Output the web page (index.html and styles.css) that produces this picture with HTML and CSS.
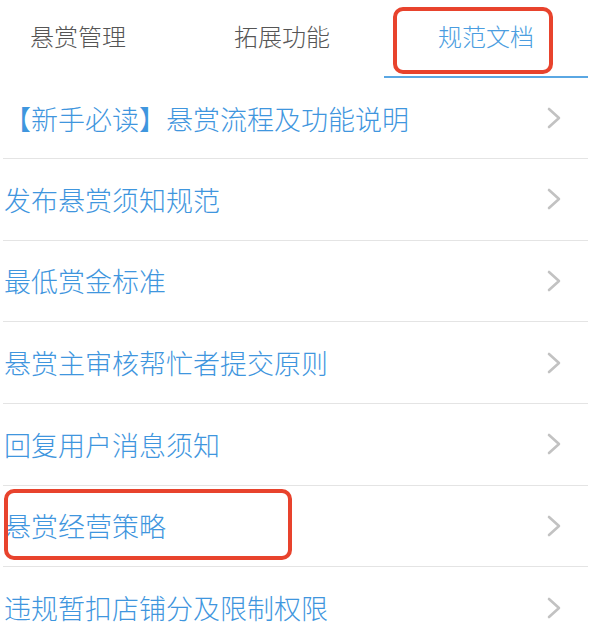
FILE: index.html
```html
<!DOCTYPE html>
<html lang="zh-CN">
<head>
<meta charset="utf-8">
<title>规范文档</title>
<link rel="stylesheet" href="styles.css">
</head>
<body>
<div class="page">
  <nav class="tabs">
    <div class="tab">悬赏管理</div>
    <div class="tab">拓展功能</div>
    <div class="tab active">规范文档</div>
  </nav>
  <ul class="list">
    <li class="row"><span class="label">【新手必读】悬赏流程及功能说明</span><svg class="chev" viewBox="0 0 16 22" width="16" height="22"><polyline points="3,2 13,11 3,20"/></svg></li>
    <li class="row"><span class="label">发布悬赏须知规范</span><svg class="chev" viewBox="0 0 16 22" width="16" height="22"><polyline points="3,2 13,11 3,20"/></svg></li>
    <li class="row"><span class="label">最低赏金标准</span><svg class="chev" viewBox="0 0 16 22" width="16" height="22"><polyline points="3,2 13,11 3,20"/></svg></li>
    <li class="row"><span class="label">悬赏主审核帮忙者提交原则</span><svg class="chev" viewBox="0 0 16 22" width="16" height="22"><polyline points="3,2 13,11 3,20"/></svg></li>
    <li class="row"><span class="label">回复用户消息须知</span><svg class="chev" viewBox="0 0 16 22" width="16" height="22"><polyline points="3,2 13,11 3,20"/></svg></li>
    <li class="row"><span class="label">悬赏经营策略</span><svg class="chev" viewBox="0 0 16 22" width="16" height="22"><polyline points="3,2 13,11 3,20"/></svg></li>
    <li class="row"><span class="label">违规暂扣店铺分及限制权限</span><svg class="chev" viewBox="0 0 16 22" width="16" height="22"><polyline points="3,2 13,11 3,20"/></svg></li>
  </ul>
  <div class="mark mark-tab"></div>
  <div class="mark mark-row"></div>
</div>
</body>
</html>
```
FILE: styles.css
```css
html, body {
  margin: 0;
  padding: 0;
  background: #ffffff;
}
body {
  font-family: "Noto Sans CJK SC", "Noto Sans", sans-serif;
  font-weight: 300;
  width: 600px;
  height: 626px;
  overflow: hidden;
}
.page {
  position: relative;
  width: 600px;
  height: 626px;
  overflow: hidden;
}
.tabs {
  display: flex;
  margin-left: -24px;
  height: 78px;
}
.tab {
  width: 204px;
  flex: none;
  box-sizing: border-box;
  height: 78px;
  display: flex;
  align-items: center;
  justify-content: center;
  padding-bottom: 5px;
  font-size: 24px;
  color: #555555;
  border-bottom: 2px solid transparent;
}
.tab.active {
  color: #4a9de0;
  border-bottom-color: #5aa7e3;
}
.list {
  list-style: none;
  margin: 0 0 0 3px;
  padding: 0;
  width: 585px;
}
.row {
  box-sizing: border-box;
  height: 81.67px;
  display: flex;
  align-items: center;
  justify-content: space-between;
  padding: 0 26px 0 1px;
  border-bottom: 1.5px solid #e4e4e4;
}
.row:first-child {
  height: 81px;
}
.label {
  font-size: 27px;
  color: #3f96de;
  white-space: nowrap;
  letter-spacing: 0;
}
.chev {
  flex: none;
  fill: none;
  stroke: #c2c2c2;
  stroke-width: 2.6;
  stroke-linecap: round;
  stroke-linejoin: round;
}
.mark {
  position: absolute;
  box-sizing: border-box;
  border: 4px solid #e8432d;
  border-radius: 10px;
}
.mark-tab {
  left: 393px;
  top: 7px;
  width: 160px;
  height: 67px;
}
.mark-row {
  left: 4px;
  top: 489px;
  width: 288px;
  height: 71px;
}
```
